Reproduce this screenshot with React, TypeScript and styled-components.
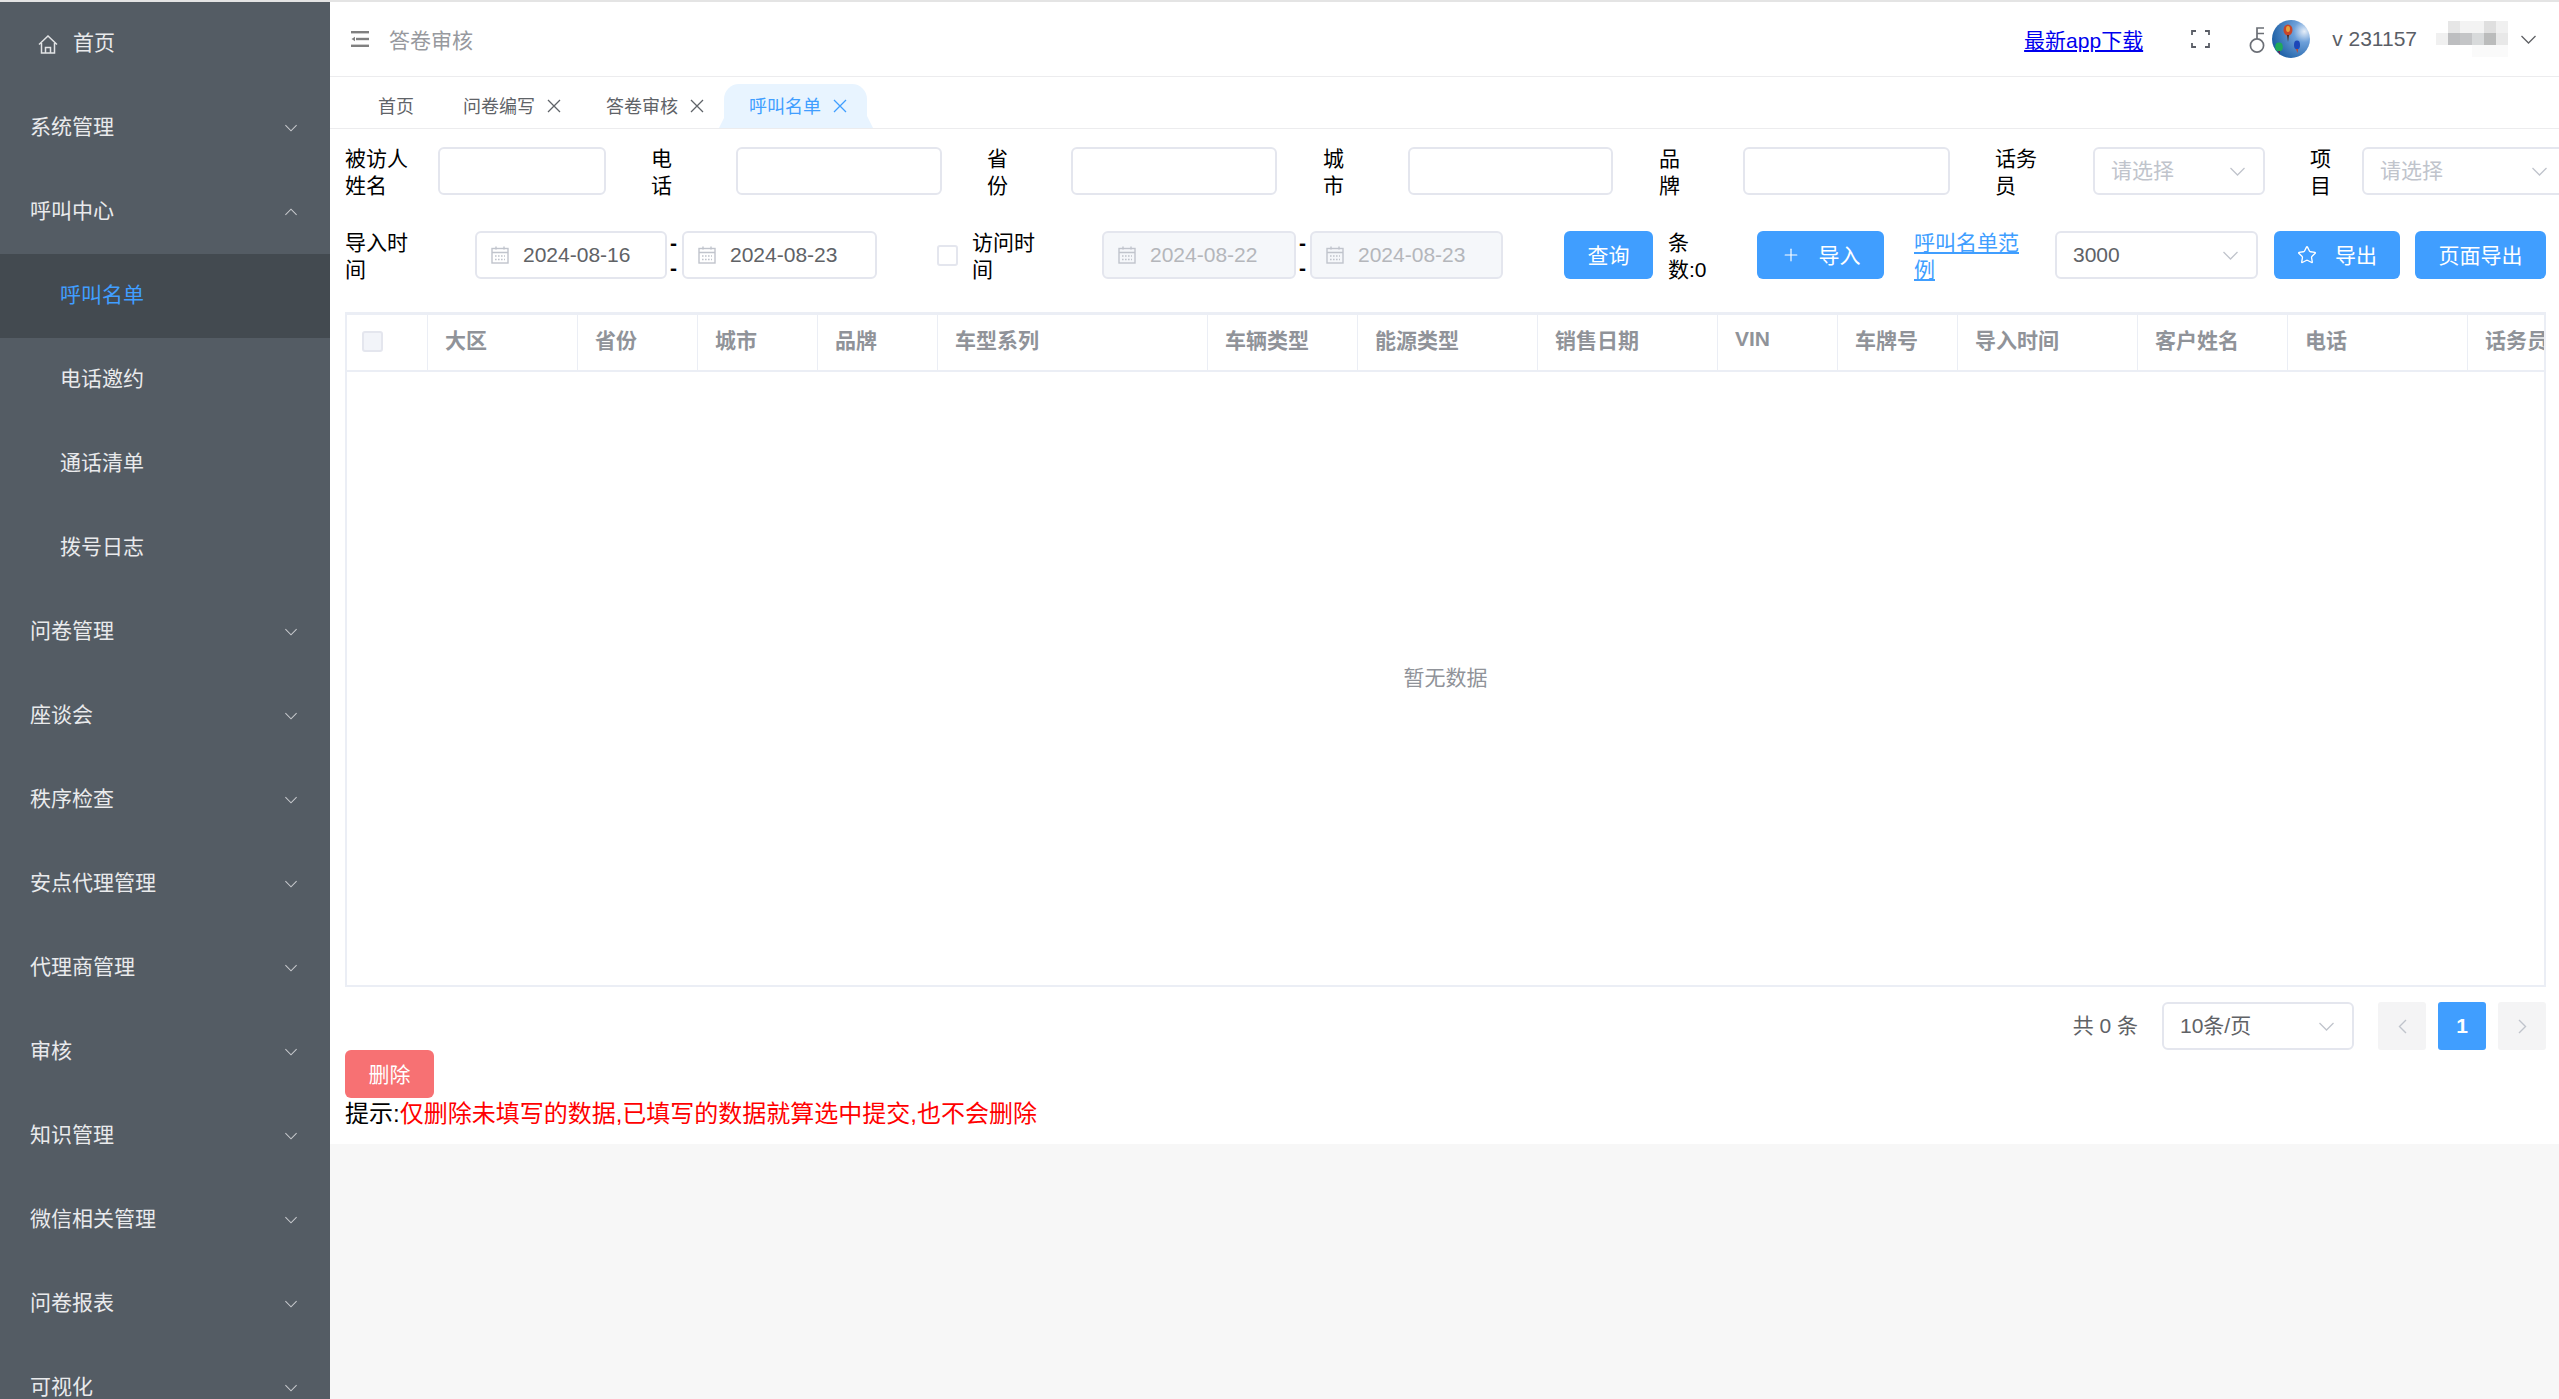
import { styled, createGlobalStyle } from 'styled-components';
import { Plus, Star } from 'lucide-react';

const FONT = `'Liberation Sans', 'Noto Sans CJK SC', sans-serif`;

const GlobalStyle = createGlobalStyle`
  html, body {
    margin: 0;
    padding: 0;
    height: 100%;
    overflow: hidden;
    background: #f7f7f7;
    font-family: ${FONT};
  }
  * {
    box-sizing: border-box;
  }
`;

const Page = styled.div`
  display: flex;
  width: 2559px;
  height: 1399px;
  border-top: 2px solid #e4e4e4;
  overflow: hidden;
`;

/* ---------- sidebar ---------- */

const Sidebar = styled.nav`
  flex: 0 0 330px;
  background: #545c64;
  overflow: hidden;
`;

const MenuItem = styled.div<{ $child?: boolean; $active?: boolean }>`
  display: flex;
  align-items: center;
  height: 84px;
  padding: 0 33px 0 ${(p) => (p.$child ? '60px' : '30px')};
  font-size: 21px;
  color: ${(p) => (p.$active ? '#409eff' : '#e9eaec')};
  background: ${(p) => (p.$active ? '#434a50' : 'transparent')};
`;

const MenuText = styled.span`
  flex: 1;
  padding-bottom: 6px;
`;

const HomeLink = styled(MenuItem)`
  padding-left: 38px;
  gap: 15px;
`;

/* ---------- main ---------- */

const Main = styled.main`
  flex: 1;
  min-width: 0;
  display: flex;
  flex-direction: column;
  overflow: hidden;
`;

const Panel = styled.div`
  background: #fff;
  height: 1142px;
`;

const Header = styled.header`
  display: flex;
  align-items: center;
  height: 75px;
  padding: 0 23px 0 21px;
  border-bottom: 1px solid #ececee;
`;

const PageTitle = styled.span`
  margin-left: 20px;
  font-size: 21px;
  color: #97999e;
`;

const HeaderRight = styled.div`
  display: flex;
  align-items: center;
  margin-left: auto;
`;

const AppLink = styled.a`
  font-size: 21px;
  color: #0000ee;
  text-decoration: underline;
  margin-right: 48px;
`;

const Version = styled.span`
  margin: 0 19px 0 22px;
  font-size: 21px;
  color: #5a5e66;
`;

const KeyWrap = styled.span`
  display: flex;
  margin: 0 7px 0 39px;
`;

const UserChevron = styled.span`
  display: flex;
  margin-left: 13px;
`;

const TabBar = styled.div`
  display: flex;
  align-items: flex-end;
  height: 52px;
  padding-left: 23px;
  border-bottom: 1px solid #ececee;
`;

const Tab = styled.div<{ $active?: boolean }>`
  position: relative;
  display: flex;
  align-items: center;
  gap: 12px;
  height: 44px;
  padding: 0 20px 3px 25px;
  font-size: 18px;
  color: ${(p) => (p.$active ? '#409eff' : '#5f6368')};
  background: ${(p) => (p.$active ? '#e8f4ff' : 'transparent')};
  border-radius: 15px 15px 0 0;

  svg {
    margin-top: 3px;
  }

  ${(p) =>
    p.$active &&
    `
    &::before, &::after {
      content: '';
      position: absolute;
      bottom: 0;
      width: 6px;
      height: 12px;
      background: #e8f4ff;
    }
    &::before {
      left: -5px;
      clip-path: polygon(100% 0, 100% 100%, 0 100%);
    }
    &::after {
      right: -6px;
      clip-path: polygon(0 0, 100% 100%, 0 100%);
    }
  `}
`;

const HomeTab = styled(Tab)`
  padding-right: 24px;
`;

/* ---------- filters ---------- */

const Filters = styled.div`
  padding: 18px 0 0 15px;
  width: 2260px;
`;

const FilterRow = styled.div<{ $mb: number }>`
  display: flex;
  align-items: center;
  height: 48px;
  margin-bottom: ${(p) => p.$mb}px;
  white-space: normal;
`;

const Label = styled.div<{ $text: number; $col: number; $after?: number }>`
  flex: none;
  width: ${(p) => p.$text}px;
  margin-right: ${(p) => p.$col - p.$text}px;
  margin-left: ${(p) => p.$after ?? 0}px;
  padding-top: 1px;
  font-size: 21px;
  line-height: 27px;
  color: #000;
`;

const TextInput = styled.input<{ $w: number }>`
  flex: none;
  width: ${(p) => p.$w}px;
  height: 48px;
  border: 2px solid #e4e6ee;
  border-radius: 6px;
  background: #fff;
  outline: none;
`;

const SelectBox = styled.div<{ $w: number; $ml?: number }>`
  flex: none;
  display: flex;
  align-items: center;
  justify-content: space-between;
  width: ${(p) => p.$w}px;
  height: 48px;
  margin-left: ${(p) => p.$ml ?? 0}px;
  padding: 0 18px 0 16px;
  border: 2px solid #e4e6ee;
  border-radius: 6px;
  background: #fff;
  font-size: 21px;
`;

const SelectText = styled.span<{ $placeholder?: boolean }>`
  padding-bottom: 4px;
  color: ${(p) => (p.$placeholder ? '#c0c4cc' : '#606266')};
`;

const SelectNumber = styled(SelectText)`
  padding-bottom: 0;
`;

const DateBox = styled.div<{ $w: number; $disabled?: boolean }>`
  flex: none;
  display: flex;
  align-items: center;
  gap: 14px;
  width: ${(p) => p.$w}px;
  height: 48px;
  padding-left: 14px;
  border: 2px solid #e4e6ee;
  border-radius: 6px;
  font-size: 21px;
  color: ${(p) => (p.$disabled ? '#b4b6bb' : '#606266')};
  background: ${(p) => (p.$disabled ? '#f5f7fa' : '#fff')};
`;

const DateDash = styled.div<{ $w: number }>`
  flex: none;
  width: ${(p) => p.$w}px;
  padding-left: 3px;
  font-size: 21px;
  font-weight: 700;
  line-height: 25px;
  color: #000;
`;

const DashLine = styled.div`
  height: 25px;
`;

const CheckSquare = styled.span<{ $ml?: number; $disabled?: boolean }>`
  flex: none;
  display: block;
  width: 21px;
  height: 21px;
  margin-left: ${(p) => p.$ml ?? 0}px;
  border: 2px solid #e4e6ee;
  border-radius: 3px;
  background: ${(p) => (p.$disabled ? '#f2f4f9' : '#fff')};
`;

const Button = styled.button<{ $w: number; $ml?: number; $gap?: number; $danger?: boolean }>`
  flex: none;
  display: flex;
  align-items: center;
  justify-content: center;
  gap: ${(p) => p.$gap ?? 0}px;
  width: ${(p) => p.$w}px;
  height: 48px;
  margin-left: ${(p) => p.$ml ?? 0}px;
  padding: 0 0 3px;
  border: none;
  border-radius: 6px;
  font-family: ${FONT};
  font-size: 21px;
  color: #fff;
  background: ${(p) => (p.$danger ? '#f77173' : '#409eff')};

  svg {
    margin-top: 3px;
  }
`;

const SampleLink = styled.a`
  flex: none;
  width: 106px;
  margin: 0 35px 0 30px;
  padding-top: 1px;
  font-size: 21px;
  line-height: 27px;
  color: #409eff;
  text-decoration: underline;
`;

/* ---------- table ---------- */

const TableWrap = styled.div`
  display: flex;
  flex-direction: column;
  width: 2201px;
  height: 675px;
  margin-left: 15px;
  border: solid #ebeef5;
  border-width: 3px 2px 2px 2px;
  overflow: hidden;
`;

const HeadRow = styled.div`
  display: flex;
  flex: none;
  height: 57px;
  border-bottom: 2px solid #ebeef5;
`;

const HeadCell = styled.div<{ $w: number }>`
  flex: 0 0 ${(p) => p.$w}px;
  display: flex;
  align-items: center;
  padding: 0 0 8px 17px;
  border-right: 1px solid #ebeef5;
  font-size: 21px;
  font-weight: 700;
  color: #909399;
  white-space: nowrap;
`;

const CheckCell = styled(HeadCell)`
  padding: 0 0 2px 15px;
`;

const EmptyBody = styled.div`
  flex: 1;
  display: flex;
  align-items: center;
  justify-content: center;
  padding-bottom: 6px;
  font-size: 21px;
  color: #909399;
`;

/* ---------- pagination ---------- */

const Pagination = styled.div`
  display: flex;
  align-items: center;
  justify-content: flex-end;
  width: 2201px;
  height: 48px;
  margin: 15px 0 0 15px;
`;

const Total = styled.span`
  margin-right: 24px;
  padding-bottom: 4px;
  font-size: 21px;
  color: #606266;
`;

const PageBtn = styled.div<{ $active?: boolean }>`
  display: flex;
  align-items: center;
  justify-content: center;
  width: 48px;
  height: 48px;
  margin-left: 12px;
  border-radius: 3px;
  font-size: 21px;
  font-weight: 700;
  color: #fff;
  background: ${(p) => (p.$active ? '#409eff' : '#f4f4f5')};
`;

const PrevBtn = styled(PageBtn)`
  margin-left: 24px;
`;

const Footer = styled.div`
  padding-left: 15px;
`;

const Hint = styled.div`
  font-size: 24px;
  line-height: 32px;
  color: #000;
`;

const HintRed = styled.span`
  color: #f00;
`;

/* ---------- icons ---------- */

const Chevron = ({ up, color = '#c0c4cc', size = 15 }: { up?: boolean; color?: string; size?: number }) => (
  <svg width={size} height={size} viewBox="0 0 15 15" fill="none" stroke={color} strokeWidth="1.3">
    <path d={up ? 'M0.5 11 L7.5 4 L14.5 11' : 'M0.5 4 L7.5 11 L14.5 4'} />
  </svg>
);

const CloseIcon = () => (
  <svg width="14" height="14" viewBox="0 0 14 14" fill="none" stroke="currentColor" strokeWidth="1.3">
    <path d="M1 1 L13 13 M13 1 L1 13" />
  </svg>
);

const CalendarIcon = () => (
  <svg width="18" height="18" viewBox="0 0 18 18" fill="none" stroke="#c0c4cc" strokeWidth="1.4">
    <rect x="1" y="2.5" width="16" height="14.5" />
    <path d="M1 6.5 H17 M5 0.5 V3.5 M13 0.5 V3.5" />
    <path d="M4 10 H14 M4 13.5 H14" strokeDasharray="1.6 1.4" />
  </svg>
);

const HomeIcon = () => (
  <svg width="20" height="19" viewBox="0 0 20 19" fill="none" stroke="#e1e3e5" strokeWidth="1.5">
    <path d="M1 9.5 L10 1 L19 9.5 M3.5 8 V18 H16.5 V8" />
    <path d="M7.5 18 V12.5 H12.5 V18" />
  </svg>
);

const FoldIcon = () => (
  <svg width="18" height="16" viewBox="0 0 18 16" fill="#808080">
    <rect x="0" y="0" width="18" height="2.4" />
    <rect x="5" y="6.8" width="13" height="2.4" />
    <path d="M0.5 8 L4 5.8 V10.2 Z" />
    <rect x="0" y="13.6" width="18" height="2.4" />
  </svg>
);

const FullscreenIcon = () => (
  <svg width="19" height="18" viewBox="0 0 19 18" fill="none" stroke="#5a5e66" strokeWidth="1.8">
    <path d="M1 5 V1 H5 M14 1 H18 V5 M18 13 V17 H14 M5 17 H1 V13" />
  </svg>
);

const KeyIcon = () => (
  <svg width="16" height="27" viewBox="0 0 16 27" fill="none" stroke="#6b6f76" strokeWidth="1.7">
    <circle cx="8" cy="19.5" r="6.6" />
    <path d="M8 13 V2 H15 M8 7.5 H15" />
  </svg>
);

const Avatar = () => (
  <svg width="38" height="38" viewBox="0 0 38 38">
    <defs>
      <radialGradient id="sky" cx="0.85" cy="0.3" r="0.95">
        <stop offset="0" stopColor="#e6eef8" />
        <stop offset="0.3" stopColor="#6da0da" />
        <stop offset="1" stopColor="#14589f" />
      </radialGradient>
    </defs>
    <circle cx="19" cy="19" r="19" fill="url(#sky)" />
    <ellipse cx="16" cy="10" rx="4.5" ry="5.5" fill="#c8452a" />
    <ellipse cx="16" cy="9" rx="2" ry="3" fill="#e6a23c" />
    <path d="M15 15 L17 15 L16 22 Z" fill="#4a2a20" />
    <ellipse cx="7" cy="27" rx="3.8" ry="4.4" fill="#1faa59" />
    <path d="M6 31 L8 31 L7.5 35 Z" fill="#6a2050" />
    <ellipse cx="25" cy="25" rx="3" ry="4.4" fill="#1c47b8" />
    <path d="M24 29 L26 29 L25.5 33 Z" fill="#c8452a" />
  </svg>
);

const mosaicTiles = [
  ['#ffffff', '#e6e6e6', '#f3f3f3', '#f3f3f3', '#dfdfdf', '#f0f0f0'],
  ['#f0f0f0', '#bdbec0', '#c4c5c7', '#d8dadb', '#bbbcbc', '#e8e8e8'],
  ['#ffffff', '#ffffff', '#ffffff', '#fafafa', '#fafafa', '#fafafa'],
];

const BlurredName = () => (
  <svg width="72" height="36" viewBox="0 0 72 36">
    {mosaicTiles.map((row, y) =>
      row.map((fill, x) => <rect key={`${x}-${y}`} x={x * 12} y={y * 12} width="12" height="12" fill={fill} />)
    )}
  </svg>
);

/* ---------- data ---------- */

const menuItems = [
  { label: '系统管理' },
  { label: '呼叫中心', open: true },
  { label: '呼叫名单', child: true, active: true },
  { label: '电话邀约', child: true },
  { label: '通话清单', child: true },
  { label: '拨号日志', child: true },
  { label: '问卷管理' },
  { label: '座谈会' },
  { label: '秩序检查' },
  { label: '安点代理管理' },
  { label: '代理商管理' },
  { label: '审核' },
  { label: '知识管理' },
  { label: '微信相关管理' },
  { label: '问卷报表' },
  { label: '可视化' },
];

const columns = [
  { title: '大区', width: 150 },
  { title: '省份', width: 120 },
  { title: '城市', width: 120 },
  { title: '品牌', width: 120 },
  { title: '车型系列', width: 270 },
  { title: '车辆类型', width: 150 },
  { title: '能源类型', width: 180 },
  { title: '销售日期', width: 180 },
  { title: 'VIN', width: 120 },
  { title: '车牌号', width: 120 },
  { title: '导入时间', width: 180 },
  { title: '客户姓名', width: 150 },
  { title: '电话', width: 180 },
  { title: '话务员', width: 150 },
];

export default function App() {
  return (
    <>
      <GlobalStyle />
      <Page>
        <Sidebar>
          <HomeLink>
            <HomeIcon />
            <MenuText>首页</MenuText>
          </HomeLink>
          {menuItems.map((item) => (
            <MenuItem key={item.label} $child={item.child} $active={item.active}>
              <MenuText>{item.label}</MenuText>
              {!item.child && <Chevron up={item.open} color="#c9cbce" size={12} />}
            </MenuItem>
          ))}
        </Sidebar>

        <Main>
          <Panel>
            <Header>
              <FoldIcon />
              <PageTitle>答卷审核</PageTitle>
              <HeaderRight>
                <AppLink>最新app下载</AppLink>
                <FullscreenIcon />
                <KeyWrap>
                  <KeyIcon />
                </KeyWrap>
                <Avatar />
                <Version>v 231157</Version>
                <BlurredName />
                <UserChevron>
                  <Chevron color="#606266" />
                </UserChevron>
              </HeaderRight>
            </Header>

            <TabBar>
              <HomeTab>首页</HomeTab>
              <Tab>
                问卷编写
                <CloseIcon />
              </Tab>
              <Tab>
                答卷审核
                <CloseIcon />
              </Tab>
              <Tab $active>
                呼叫名单
                <CloseIcon />
              </Tab>
            </TabBar>

            <Filters>
              <FilterRow $mb={36}>
                <Label $text={64} $col={93}>被访人姓名</Label>
                <TextInput $w={168} />
                <Label $text={24} $col={85} $after={45}>电话</Label>
                <TextInput $w={206} />
                <Label $text={24} $col={84} $after={45}>省份</Label>
                <TextInput $w={206} />
                <Label $text={24} $col={85} $after={46}>城市</Label>
                <TextInput $w={205} />
                <Label $text={24} $col={84} $after={46}>品牌</Label>
                <TextInput $w={207} />
                <Label $text={44} $col={98} $after={45}>话务员</Label>
                <SelectBox $w={172}>
                  <SelectText $placeholder>请选择</SelectText>
                  <Chevron />
                </SelectBox>
                <Label $text={24} $col={52} $after={45}>项目</Label>
                <SelectBox $w={205}>
                  <SelectText $placeholder>请选择</SelectText>
                  <Chevron />
                </SelectBox>
              </FilterRow>

              <FilterRow $mb={33}>
                <Label $text={64} $col={130}>导入时间</Label>
                <DateBox $w={192}>
                  <CalendarIcon />
                  2024-08-16
                </DateBox>
                <DateDash $w={15}>
                  <DashLine>-</DashLine>
                  <DashLine>-</DashLine>
                </DateDash>
                <DateBox $w={195}>
                  <CalendarIcon />
                  2024-08-23
                </DateBox>
                <CheckSquare $ml={60} />
                <Label $text={64} $col={130} $after={14}>访问时间</Label>
                <DateBox $w={194} $disabled>
                  <CalendarIcon />
                  2024-08-22
                </DateBox>
                <DateDash $w={14}>
                  <DashLine>-</DashLine>
                  <DashLine>-</DashLine>
                </DateDash>
                <DateBox $w={193} $disabled>
                  <CalendarIcon />
                  2024-08-23
                </DateBox>
                <Button $w={89} $ml={61}>查询</Button>
                <Label $text={40} $col={89} $after={15}>条数:0</Label>
                <Button $w={127} $gap={18}>
                  <Plus size={20} strokeWidth={1.4} />
                  导入
                </Button>
                <SampleLink>呼叫名单范例</SampleLink>
                <SelectBox $w={203}>
                  <SelectNumber>3000</SelectNumber>
                  <Chevron />
                </SelectBox>
                <Button $w={126} $ml={16} $gap={18}>
                  <Star size={20} strokeWidth={1.6} />
                  导出
                </Button>
                <Button $w={131} $ml={15}>页面导出</Button>
              </FilterRow>
            </Filters>

            <TableWrap>
              <HeadRow>
                <CheckCell $w={81}>
                  <CheckSquare $disabled />
                </CheckCell>
                {columns.map((col) => (
                  <HeadCell key={col.title} $w={col.width}>{col.title}</HeadCell>
                ))}
              </HeadRow>
              <EmptyBody>暂无数据</EmptyBody>
            </TableWrap>

            <Pagination>
              <Total>共 0 条</Total>
              <SelectBox $w={192}>
                <SelectText>10条/页</SelectText>
                <Chevron />
              </SelectBox>
              <PrevBtn>
                <svg width="9" height="15" viewBox="0 0 9 15" fill="none" stroke="#c0c4cc" strokeWidth="1.4">
                  <path d="M8 1 L1.5 7.5 L8 14" />
                </svg>
              </PrevBtn>
              <PageBtn $active>1</PageBtn>
              <PageBtn>
                <svg width="9" height="15" viewBox="0 0 9 15" fill="none" stroke="#c0c4cc" strokeWidth="1.4">
                  <path d="M1 1 L7.5 7.5 L1 14" />
                </svg>
              </PageBtn>
            </Pagination>

            <Footer>
              <Button $w={89} $danger>删除</Button>
              <Hint>
                提示:<HintRed>仅删除未填写的数据,已填写的数据就算选中提交,也不会删除</HintRed>
              </Hint>
            </Footer>
          </Panel>
        </Main>
      </Page>
    </>
  );
}
